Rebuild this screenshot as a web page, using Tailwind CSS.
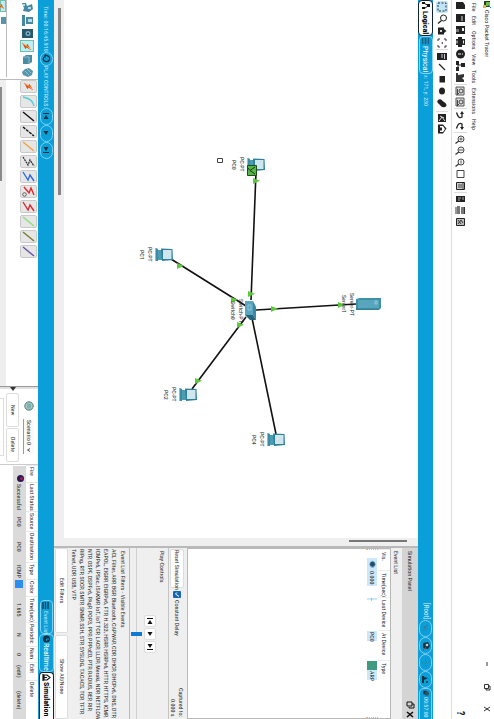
<!DOCTYPE html>
<html lang="en">
<head>
<meta charset="utf-8">
<title>Cisco Packet Tracer</title>
<script src="https://cdn.jsdelivr.net/npm/@tailwindcss/browser@4"></script>
</head>
<body class="bg-white">
<!-- shared icon shapes -->
<svg class="hidden" aria-hidden="true">
  <symbol id="pc" viewBox="0 0 18 15"><path d="M0 1h1v13H0z" fill="#8fbfcd"/><path d="M1 1l2 1v12H1z" fill="#3d8ba3"/><path d="M3 3h4v10H3z" fill="#4b9cb4"/><path d="M6 1.500L17.500 2l.5 11L7 14z" fill="#2f7f97"/><path d="M8 3h8.500v9H8z" fill="#cfe6ee"/></symbol>
  <symbol id="arrow" viewBox="0 0 7 6"><path d="M0 0L7 2.800L0 6z" fill="#5cc83c"/></symbol>
  <symbol id="bolt" viewBox="0 0 12 12"><path d="M1 2l5 3 1-2 4 7-5-3-1 2z" fill="#e8431c"/><path d="M2 3l5 3 3 3" stroke="#ffc02a" fill="none"/></symbol>
  <symbol id="zoomglass" viewBox="0 0 12 12"><circle cx="7" cy="6" r="3" fill="#f4f4f4" stroke="#444"/><path d="M4.800 8L1.500 10.500" stroke="#333" stroke-width="1.300"/></symbol>
  <symbol id="undo" viewBox="0 0 12 12"><path d="M2.500 3.500C4 8.500 6 9.500 8 8V4" fill="none" stroke="#222" stroke-width="1.300"/><path d="M6 5l2-3 2 3z" fill="#222"/></symbol>
  <symbol id="copy" viewBox="0 0 12 12"><path d="M2 2h8v8H2z" fill="#ddd" stroke="#555"/><circle cx="7" cy="6" r="2" fill="none" stroke="#444"/><path d="M3.500 4v5M5 8l-2 2" stroke="#444"/></symbol>
</svg>

<div class="[writing-mode:vertical-rl] w-screen h-screen flex flex-col overflow-hidden bg-white text-[#222] text-[6px] leading-[8px] whitespace-nowrap font-['Liberation_Sans_Narrow','Roboto_Condensed','Liberation_Sans',sans-serif]">

  <header class="w-[14px] shrink-0 flex items-center justify-between">
    <h1 class="flex items-center gap-px">
      <svg class="w-[10px] h-[9px]" viewBox="0 0 10 9"><path d="M2 1h6v6H2z" fill="#253b2b"/><path d="M4 2h4v4H4z" fill="#6cc13b"/><path d="M1 5h3v3H1z" fill="#e5b63a"/><path d="M6 5l3 3" stroke="#1b7fa6"/></svg>
      <span>Cisco Packet Tracer</span>
    </h1>
    <div class="flex items-center">
      <button aria-label="Minimize" class="h-[22px] w-[12px] grid place-items-center"><svg class="w-[8px] h-[8px]" viewBox="0 0 8 8"><path d="M4 2v4" stroke="#333"/></svg></button>
      <button aria-label="Restore" class="h-[23px] w-[12px] grid place-items-center"><svg class="w-[8px] h-[8px]" viewBox="0 0 8 8"><path d="M1.500 1.500h4v4h-4zM3 6v1h4V3H6" fill="none" stroke="#333"/></svg></button>
      <button aria-label="Close" class="h-[21px] w-[12px] grid place-items-center"><svg class="w-[8px] h-[8px]" viewBox="0 0 8 8"><path d="M1 2l6 4M7 2L1 6" stroke="#333"/></svg></button>
    </div>
  </header>

  <nav class="w-[12px] shrink-0 flex items-center gap-[5px] pt-[3px]">
    <a href="#">File</a><a href="#">Edit</a><a href="#">Options</a><a href="#">View</a><a href="#">Tools</a><a href="#">Extensions</a><a href="#">Help</a>
  </nav>

  <div class="w-[17px] shrink-0 flex items-center border-l border-[#ddd] [&>button]:h-[12px] [&>button]:w-[13px] [&>button]:grid [&>button]:place-items-center [&_svg]:w-[12px] [&_svg]:h-[12px]">
    <button aria-label="New"><svg viewBox="0 0 12 12"><path d="M2 2h7l2 3v4H2z" fill="#222"/></svg></button>
    <button aria-label="Open"><svg viewBox="0 0 12 12"><path d="M2 2h9v8H2z" fill="#222"/><path d="M8 4v5" stroke="#ddd"/></svg></button>
    <button aria-label="Save"><svg viewBox="0 0 12 12"><path d="M2 2h9v8H2z" fill="#222"/><path d="M8 4h2v3H8z" fill="#eee"/><path d="M2 5h3v3H2z" fill="#777"/></svg></button>
    <button aria-label="Print"><svg viewBox="0 0 12 12"><path d="M4 1h4v10H4zM2 3h3v6H2zM8 3h3v6H8z" fill="#222"/><path d="M3 4.500v3M9.500 4.500v3" stroke="#eee"/></svg></button>
    <button aria-label="Information"><svg viewBox="0 0 12 12"><circle cx="6.500" cy="6" r="4.500" fill="#222"/><path d="M4 6h3M8 6h1" stroke="#fff"/></svg></button>
    <button aria-label="Network"><svg viewBox="0 0 12 12"><path d="M7 3h4v4H7zM2 1h3v4H2zM2 7h3v4H2z" fill="#222"/><path d="M7 5H4v4" stroke="#222" fill="none"/></svg></button>
    <button aria-label="User"><svg viewBox="0 0 12 12"><path d="M2 1h2v9H2zM4 3l6-1v3l-2 1 2 2v2H4z" fill="#333"/></svg></button>
    <button aria-label="Copy" class="border-t border-[#ddd]"><svg><use href="#copy"/></svg></button>
    <button aria-label="Paste"><svg><use href="#copy"/></svg></button>
    <button aria-label="Undo" class="border-t border-[#ddd]"><svg><use href="#undo"/></svg></button>
    <button aria-label="Redo"><svg viewBox="0 0 12 12"><path d="M2.500 8.500C4 3.500 6 2.500 8 4v4" fill="none" stroke="#222" stroke-width="1.300"/><path d="M6 7l2 3 2-3z" fill="#222"/></svg></button>
    <button aria-label="Zoom in" class="border-t border-[#ddd]"><svg viewBox="0 0 12 12"><use href="#zoomglass"/><path d="M5.500 6h3M7 4.500v3" stroke="#555"/></svg></button>
    <button aria-label="Zoom reset"><svg viewBox="0 0 12 12"><use href="#zoomglass"/><path d="M6 5v2M8 5v2" stroke="#555"/></svg></button>
    <button aria-label="Zoom out"><svg viewBox="0 0 12 12"><use href="#zoomglass"/><path d="M7 4.500v3" stroke="#555"/></svg></button>
    <button aria-label="View palette"><svg viewBox="0 0 12 12"><path d="M3 2.500h7v7H3z" fill="none" stroke="#444"/></svg></button>
    <button aria-label="Custom view"><svg viewBox="0 0 12 12"><path d="M2.500 2.500h8v7h-8z" fill="#ccc" stroke="#222"/><path d="M4 5h4M4 7h4M9 3v6" stroke="#444"/></svg></button>
    <button aria-label="Command log" class="border-t border-[#ddd]"><svg viewBox="0 0 12 12"><path d="M2 3h9v6H2z" fill="#222"/><path d="M4 5h3M4 7h2M9 4v3" stroke="#aaa"/></svg></button>
    <button aria-label="Device list"><svg viewBox="0 0 12 12"><path d="M3 2h3v8H3zM7 3h3v7H7z" fill="#777"/><path d="M2 3v7M10.500 3v7" stroke="#333"/></svg></button>
    <button aria-label="Cluster"><svg viewBox="0 0 12 12"><path d="M2.500 2.500h8v7h-8z" fill="#bbb" stroke="#222"/><path d="M4 8l3-4 2 3M4 4l3 4" stroke="#333" fill="none"/></svg></button>
    <button aria-label="Help" class="mt-auto text-[10px] font-bold leading-[10px]">?</button>
  </div>

  <div class="w-[18px] shrink-0 flex items-center pt-px [&>button]:h-[12px] [&>button]:w-[12px] [&>button]:grid [&>button]:place-items-center [&_svg]:w-[12px] [&_svg]:h-[12px]">
    <button aria-label="Select" class="bg-[#bfe3f7] rounded-xs"><svg viewBox="0 0 12 12"><path d="M2 2h8v8H2z" fill="none" stroke="#333" stroke-dasharray="2 1.500"/></svg></button>
    <button aria-label="Inspect"><svg viewBox="0 0 12 12"><circle cx="7.500" cy="5" r="3" fill="none" stroke="#222"/><path d="M5.500 7.500L2 10.500" stroke="#222" stroke-width="1.200"/></svg></button>
    <button aria-label="Delete"><svg viewBox="0 0 12 12"><path d="M2 2.500h6v7H2zM8 4l2.500 2L8 8z" fill="#222"/><path d="M4 5l2 2M6 5l-2 2" stroke="#fff" stroke-width=".8"/></svg></button>
    <button aria-label="Resize"><svg viewBox="0 0 12 12"><path d="M2 4V2h2M8 2h2v2M10 8v2H8M4 10H2V8" fill="none" stroke="#333"/><path d="M5 6l2-1v2z" fill="#333"/></svg></button>
    <button aria-label="Note" class="border-t border-[#ddd]"><svg viewBox="0 0 12 12"><path d="M1 3h10v7H1z" fill="#222"/><path d="M5 5h2M5 7h2M8.500 4v5" stroke="#ccc"/></svg></button>
    <button aria-label="Line"><svg viewBox="0 0 12 12"><path d="M3 3l6 6" stroke="#222" stroke-width="1.300"/></svg></button>
    <button aria-label="Rectangle"><svg viewBox="0 0 12 12"><path d="M3.500 3h5.500v6.500H3.500z" fill="#222"/></svg></button>
    <button aria-label="Ellipse"><svg viewBox="0 0 12 12"><ellipse cx="6" cy="6" rx="3" ry="3.500" fill="#222"/></svg></button>
    <button aria-label="Freeform"><svg viewBox="0 0 12 12"><path d="M2 3c3-2 4 1 6 2s4 4 1 5-4-1-5-2-4-3-2-5z" fill="#222"/></svg></button>
    <button aria-label="Add simple PDU" class="mt-[2px] border-t border-[#ddd]"><svg viewBox="0 0 12 12"><path d="M2 2h8v8H2z" fill="#222"/><path d="M3 9l3-4 3 4M4 4l4 2" stroke="#ddd" fill="none"/></svg></button>
    <button aria-label="Add complex PDU"><svg viewBox="0 0 12 12"><path d="M2 1.500h5l3.500 4-3.500 5H2z" fill="#222"/><path d="M4 3h3l2 3-2 3H4" fill="#fff"/><path d="M4 4.500h2v3H4z" fill="#222"/></svg></button>
  </div>

  <div class="w-[15px] shrink-0 bg-[#0b9fda] text-white flex items-center justify-between">
    <div class="flex items-center h-full">
      <button class="w-[15px] h-[36px] flex items-center justify-center gap-px bg-white text-black font-bold text-[8px] leading-[11px] border border-[#123] rounded-[4px]">
        <svg class="w-[10px] h-[9px]" viewBox="0 0 10 9"><path d="M2.500 2l5 2.500-4 3" fill="none" stroke="#111"/><path d="M1 1h3v2H1zM6 3h3v3H6zM1 6h3v2H1z" fill="#111"/></svg>Logical</button>
      <button class="w-[14px] h-[38px] flex items-center justify-center gap-px text-[8px] leading-[11px] border border-[#8fd5f2] rounded-[4px]">
        <svg class="w-[9px] h-[8px]" viewBox="0 0 9 8"><path d="M1 1h7v6H1z" fill="#0f5f86"/><path d="M3 1v6M6 1v6" stroke="#29b1e6"/></svg>Physical</button>
      <span class="pt-px text-[#c8ecfb]">x: 171, y: 230</span>
    </div>
    <div class="flex items-center">
      <span class="text-[7px] pb-px text-[#d9f2fc]">[Root]</span>
      <button aria-label="Up" class="w-[13px] h-[17px] border border-[#7fd0f1] rounded-full grid place-items-center"><svg class="w-[9px] h-[9px]" viewBox="0 0 9 9"><path d="M7 1L3 3l4 2M3 3v4" fill="none" stroke="#417a92"/></svg></button>
      <button aria-label="New cluster" class="w-[13px] h-[17px] border border-[#7fd0f1] rounded-full grid place-items-center"><svg class="w-[10px] h-[10px]" viewBox="0 0 10 10"><path d="M2 2l5-1 2 4-2 3-5-1z" fill="#1c3440"/><circle cx="6" cy="4" r="1.300" fill="#b7d9e6"/><path d="M2 9l3-3" stroke="#b32" /></svg></button>
      <button aria-label="Move object" class="w-[13px] h-[17px] border border-[#7fd0f1] rounded-full grid place-items-center"><svg class="w-[9px] h-[9px]" viewBox="0 0 9 9"><path d="M4.500 1v7M1 4.500h7" stroke="#417a92" stroke-dasharray="2 1"/></svg></button>
      <button aria-label="Background" class="w-[13px] h-[17px] border border-[#7fd0f1] rounded-full grid place-items-center"><svg class="w-[9px] h-[9px]" viewBox="0 0 9 9"><path d="M1 1h2v7H1zM3 2l4 1-4 2z" fill="#13303f"/><circle cx="6" cy="7" r="1" fill="#13303f"/></svg></button>
      <button class="w-[13px] h-[31px] border border-b-0 border-[#7fd0f1] rounded-t-[5px] flex items-center text-[#d9f2fc]"><svg class="w-[9px] h-[8px] shrink-0" viewBox="0 0 9 9"><path d="M2 2h4v4H2z" fill="#13303f"/><circle cx="6" cy="5" r="2.500" fill="#2c5263"/></svg>09:57:00</button>
    </div>
  </div>

  <main class="flex-1 min-w-0 flex bg-[#efefef]">
    <section class="flex-1 min-h-0 flex" aria-label="Workspace">
      <div class="flex-1 min-h-0 flex flex-col">
        <div class="relative flex-1 bg-white">
          <svg class="absolute top-0 right-0 w-[354px] h-[538px]" viewBox="64 0 354 538">
            <path d="M256 172L251 300M171 259L246 306M192 389L246 317M276 434L252 318M256 310L356 304" stroke="#111" stroke-width="1.600" fill="none"/>
            <g><use href="#arrow" x="253" y="178" width="7" height="6"/><use href="#arrow" x="248" y="291" width="7" height="6"/><use href="#arrow" x="177" y="263" width="7" height="6"/><use href="#arrow" x="231" y="297" width="7" height="6"/><use href="#arrow" x="271" y="306" width="7" height="6"/><use href="#arrow" x="338" y="302" width="7" height="6"/><use href="#arrow" x="237" y="322" width="7" height="6"/><use href="#arrow" x="195" y="378" width="7" height="6"/></g>
            <path d="M217.500 158.500h5v4h-5z" fill="none" stroke="#444"/>
          </svg>
          <figure class="absolute top-[157px] right-[153px] flex flex-col items-center"><svg class="w-[18px] h-[15px]"><use href="#pc"/></svg><figcaption class="text-center pr-px">PC-PT<br>PC0</figcaption></figure>
          <figure class="absolute top-[247px] right-[245px] flex flex-col items-center"><svg class="w-[18px] h-[15px]"><use href="#pc"/></svg><figcaption class="text-center pr-px">PC-PT<br>PC1</figcaption></figure>
          <figure class="absolute top-[387px] right-[221px] flex flex-col items-center"><svg class="w-[18px] h-[15px]"><use href="#pc"/></svg><figcaption class="text-center pr-px">PC-PT<br>PC2</figcaption></figure>
          <figure class="absolute top-[432px] right-[133px] flex flex-col items-center"><svg class="w-[18px] h-[15px]"><use href="#pc"/></svg><figcaption class="text-center pr-px">PC-PT<br>PC4</figcaption></figure>
          <figure class="absolute top-[293px] right-[37px] flex flex-col items-center"><svg class="w-[25px] h-[14px]" viewBox="0 0 25 14"><path d="M0 2l4-1h21v10l-2 2H0z" fill="#3f8fa8"/><path d="M2 3h21v9H2z" fill="#58a6bd"/><path d="M19 4h2v3h-2z" fill="none" stroke="#b7dde8" stroke-width=".6"/><path d="M0 12h23" stroke="#2b7289"/></svg><figcaption class="text-center">Server-PT<br>Server1</figcaption></figure>
          <figure class="absolute top-[299px] right-[161px] flex flex-col items-center"><svg class="w-[12px] h-[21px]" viewBox="0 0 12 21"><path d="M0 1h8l1 14H0z" fill="#5aa5bd"/><path d="M8 1l3 6v13l-3-5z" fill="#3a8aa4"/><path d="M0 15h8l3 5H5z" fill="#23647a"/><path d="M3 5h3v5H3z" fill="none" stroke="#a9d3e0" stroke-width=".7"/></svg><figcaption class="text-center">Switch-PT<br>Switch0</figcaption></figure>
          <svg class="absolute top-[165px] right-[161px] w-[10px] h-[11px]" viewBox="0 0 10 11"><path d="M.5.500h9v10h-9z" fill="#58b548" stroke="#1d4d1a"/><path d="M8 2L3 5.500 8 9M3 5.500L1 3" fill="none" stroke="#163d14"/></svg>
        </div>
        <div class="w-[10px] shrink-0 pt-[8px] pl-[4px] pr-[3px]"><div class="h-[187px] w-[3px] bg-[#858585]"></div></div>
      </div>
      <div class="h-[8px] shrink-0 pr-[11px] pt-[2px]"><div class="w-[58px] h-[2px] bg-[#777]"></div></div>
    </section>

    <aside class="h-[173px] shrink-0 flex flex-col border-t-2 border-[#b9b9b9]">
      <div class="w-[16px] shrink-0 bg-[#d4d4d4] flex items-center justify-between pt-[3px]">
        <h2>Simulation Panel</h2>
        <div class="flex items-center gap-px">
          <button aria-label="Float"><svg class="block w-[9px] h-[8px]" viewBox="0 0 9 8"><path d="M1 1h5v4H1zM3 6v1h5V3H6" fill="none" stroke="#111"/></svg></button>
          <button aria-label="Close panel"><svg class="block w-[9px] h-[9px]" viewBox="0 0 9 9"><path d="M1 2l6 5M7 2L1 7" stroke="#111" stroke-width="1.600"/></svg></button>
        </div>
      </div>
      <h3 class="w-[11px] shrink-0 leading-[11px] pt-[3px]">Event List</h3>
      <div class="flex-1 min-w-0 border border-[#b8b8b8] bg-white">
        <table class="h-full table-fixed border-collapse text-left">
          <thead><tr class="w-[12px] [&>th]:font-normal [&>th]:border-t [&>th]:border-[#eee] [&>th]:pt-[2px]"><th class="h-[21px]">Vis.</th><th class="h-[27px]">Time(sec)</th><th class="h-[33px]">Last Device</th><th class="h-[30px]">At Device</th><th>Type</th></tr></thead>
          <tbody><tr class="w-[12px] border-x border-dotted border-[#f0b070]">
            <td class="pt-[8px]"><div class="bg-[#cce8fa] w-[10px] flex items-center justify-center"><svg class="w-[9px] h-[13px]" viewBox="0 0 9 13"><path d="M1 6.500c2-5 5-5 7 0-2 5-5 5-7 0z" fill="#7aa7c0"/><circle cx="4.500" cy="6.500" r="2.500" fill="#1f506e"/></svg></div></td>
            <td><div class="w-[10px] leading-[10px] flex"><span class="bg-[#cce8fa] pb-[2px]">0.000</span></div></td>
            <td><div class="w-[10px] leading-[10px] flex"><span class="bg-[#cce8fa]">--</span></div></td>
            <td><div class="w-[10px] leading-[10px] flex"><span class="bg-[#cce8fa] pt-px">PC0</span></div></td>
            <td><div class="w-[10px] leading-[10px] flex"><i class="h-[9px] w-[10px] bg-[#3f9a80]"></i><span class="bg-[#cce8fa] pt-px">ARP</span></div></td>
          </tr></tbody>
        </table>
      </div>
      <div class="w-[19px] shrink-0 border-l border-[#c4c4c4] flex items-center justify-between pr-[2px]">
        <div class="flex items-center gap-[3px] pt-px">
          <button class="w-[14px] h-[39px] bg-white border border-[#ddd] rounded-[2px]">Reset Simulation</button>
          <label class="flex items-center gap-[2px]"><span class="relative"><input type="checkbox" checked class="block appearance-none w-[8px] h-[7px] bg-[#1467b8] rounded-[1px]"><svg class="absolute inset-0 w-[8px] h-[7px] pointer-events-none" viewBox="0 0 8 7"><path d="M4 1.500L2.500 3 6 5.500" fill="none" stroke="#fff"/></svg></span>Constant Delay</label>
        </div>
        <p class="text-right pb-[2px]">Captured to:<br>0.000 s</p>
      </div>
      <div class="w-[39px] shrink-0 border-l border-[#bbb] flex flex-col">
        <h3 class="w-[12px] shrink-0 leading-[12px] pt-[3px]">Play Controls</h3>
        <div class="w-[13px] shrink-0 flex justify-center gap-px [&>button]:h-[12px] [&>button]:w-[12px] [&>button]:bg-white [&>button]:border [&>button]:border-[#ddd] [&>button]:rounded-[2px] [&>button]:grid [&>button]:place-items-center [&_svg]:w-[8px] [&_svg]:h-[8px]">
          <button aria-label="Back"><svg viewBox="0 0 8 8"><path d="M1 1.500h6" stroke="#111"/><path d="M6.500 7L4 3 1.500 7z" fill="#111"/></svg></button>
          <button aria-label="Play"><svg viewBox="0 0 8 8"><path d="M1.500 2h5L4 6z" fill="#111"/></svg></button>
          <button aria-label="Forward"><svg viewBox="0 0 8 8"><path d="M1 6.500h6" stroke="#111"/><path d="M6.500 1L4 5 1.500 1z" fill="#111"/></svg></button>
        </div>
        <div class="flex-1 flex items-center bg-[linear-gradient(#d0d0d0,#d0d0d0)] bg-[length:1px_100%] bg-center bg-no-repeat">
          <input type="range" aria-label="Play speed" class="[writing-mode:vertical-rl] appearance-none bg-transparent h-full w-[11px] [&::-webkit-slider-thumb]:appearance-none [&::-webkit-slider-thumb]:w-[11px] [&::-webkit-slider-thumb]:h-[4px] [&::-webkit-slider-thumb]:bg-[#0f78d4]">
        </div>
      </div>
      <h3 class="w-[11px] shrink-0 leading-[11px] pt-[3px]">Event List Filters - Visible Events</h3>
      <p class="w-[50px] shrink-0 pt-px">ACL Filter, ARP, BGP, Bluetooth, CAPWAP, CDP, DHCP, DHCPv6, DNS, DTP,<br>EAPOL, EIGRP, EIGRPv6, FTP, H.323, HSRP, HSRPv6, HTTP, HTTPS, ICMP,<br>ICMPv6, IPSec, ISAKMP, IoT, IoT TCP, LACP, LLDP, Meraki, NDP, NETFLOW,<br>NTP, OSPF, OSPFv6, PAgP, POP3, PPP, PPPoED, PTP, RADIUS, REP, RIP,<br>RIPng, RTP, SCCP, SMTP, SNMP, SSH, STP, SYSLOG, TACACS, TCP, TFTP,<br>Telnet, UDP, USB, VTP</p>
      <div class="w-[14px] shrink-0 flex gap-[2px] pl-px">
        <button class="flex-1 bg-white border border-[#ddd] rounded-[2px]">Edit Filters</button>
        <button class="flex-1 bg-white border border-[#ddd] rounded-[2px]">Show All/None</button>
      </div>
    </aside>
  </main>

  <div class="w-[16px] shrink-0 bg-[#0b9fda] text-white flex items-center justify-between">
    <div class="flex items-center pt-[6px]">
      <span class="text-[#c8ecfb]">Time: 00:16:45.910</span>
      <button aria-label="Reset network" class="w-[13px] h-[14px] border border-[#7fd0f1] rounded-full grid place-items-center"><svg class="w-[9px] h-[9px]" viewBox="0 0 9 9"><path d="M3 1.500C9 1 9 8 4 7.500 0 7 1 3 3 2.500M3 .5v3" fill="none" stroke="#12303d" stroke-width="1.200"/></svg></button>
      <span class="text-[#d9f2fc]">PLAY CONTROLS:</span>
      <button aria-label="Step back" class="w-[13px] h-[17px] border border-[#7fd0f1] rounded-full grid place-items-center"><svg class="w-[8px] h-[8px]" viewBox="0 0 8 8"><path d="M1 1.500h6" stroke="#12303d"/><path d="M6.500 7L4 3 1.500 7z" fill="#12303d"/></svg></button>
      <button aria-label="Run" class="w-[13px] h-[17px] border border-[#7fd0f1] rounded-full grid place-items-center"><svg class="w-[8px] h-[8px]" viewBox="0 0 8 8"><path d="M1.500 2h5L4 6z" fill="#12303d"/></svg></button>
      <button aria-label="Step forward" class="w-[13px] h-[17px] border border-[#7fd0f1] rounded-full grid place-items-center"><svg class="w-[8px] h-[8px]" viewBox="0 0 8 8"><path d="M1 6.500h6" stroke="#12303d"/><path d="M6.500 1L4 5 1.500 1z" fill="#12303d"/></svg></button>
    </div>
    <div class="flex items-center">
      <button class="w-[13px] h-[34px] flex items-center gap-px border border-[#7fd0f1] rounded-[4px] text-[#c8ecfb]"><svg class="w-[10px] h-[9px] shrink-0" viewBox="0 0 10 9"><path d="M2 1v7M4.500 1v7M7 1v7" stroke="#12303d" stroke-width="1.200"/></svg>Event List</button>
      <button class="w-[15px] h-[38px] flex items-center justify-center border border-[#7fd0f1] rounded-[4px] text-[8px]"><svg class="w-[9px] h-[8px] shrink-0" viewBox="0 0 9 8"><circle cx="4.500" cy="4" r="3.500" fill="#12303d"/><path d="M7 4H4.500v2" stroke="#0b9fda" fill="none"/></svg>Realtime</button>
      <button class="w-[15px] h-[47px] flex items-center bg-white text-black font-bold text-[8px] border border-b-0 border-[#123] rounded-t-[4px]"><svg class="w-[10px] h-[9px] shrink-0" viewBox="0 0 10 9"><path d="M2 1v7M3 2h3l3 2.500L6 7H3z" fill="none" stroke="#111" stroke-width="1.200"/><path d="M3 4.500h3" stroke="#111"/></svg>Simulation</button>
    </div>
  </div>

  <footer class="w-[38px] shrink-0 flex">
    <section class="h-[80px] shrink-0 border-b border-[#bbb] pr-[3px] flex flex-col justify-between" aria-label="Device types">
      <div class="w-[16px] flex items-center gap-px pt-px [&>button]:h-[12px] [&>button]:w-[14px] [&>button]:grid [&>button]:place-items-center [&_svg]:w-[13px] [&_svg]:h-[11px]">
        <button aria-label="Network devices"><svg viewBox="0 0 13 11"><path d="M1 1h4l1 3 5-2 1 5-4 3-6-1 1-3z" fill="#4689a3"/><path d="M7 5h3v2H7zM2 2h2v2H2z" fill="#b8dce8"/></svg></button>
        <button aria-label="End devices"><svg viewBox="0 0 13 11"><path d="M1 0h3v11H1zM5 2h7v7H5z" fill="#4689a3"/><path d="M7 4h4v3H7z" fill="#b8dce8"/></svg></button>
        <button aria-label="Components"><svg viewBox="0 0 13 11"><path d="M1 1h11v9H1z" fill="#28586c"/><circle cx="7" cy="5.500" r="2.500" fill="#7eb0c3"/><circle cx="7" cy="5.500" r="1" fill="#163a48"/></svg></button>
        <button aria-label="Connections" class="bg-[#b9f0f5] border border-[#7ba]"><svg viewBox="0 0 12 12"><use href="#bolt"/></svg></button>
        <button aria-label="Miscellaneous"><svg viewBox="0 0 13 11"><path d="M2 3l3-2h6v7l-3 2H2z" fill="#4b8ca5"/><path d="M2 3h6v7" stroke="#8dbdcd" fill="none"/></svg></button>
        <button aria-label="Multiuser"><svg viewBox="0 0 13 11"><path d="M4 2l4-1 4 3-1 4-4 2-5-2-1-3z" fill="#5795ad"/><path d="M4 4l4 4M6 2l4 4" stroke="#8fc0d0"/></svg></button>
      </div>
      <div class="w-[7px] mb-[2px] border-r border-[#bbb] flex items-center justify-start gap-[5px] overflow-hidden">
        <button aria-label="Copper" class="w-[6px] h-[12px] bg-[#b9f0f5] border border-[#7ba] grid place-items-center"><svg class="w-[6px] h-[10px]" viewBox="4 0 8 12"><use href="#bolt" width="12" height="12"/></svg></button>
        <button aria-label="Sub type" class="w-[5px] h-[7px] bg-[#5795ad]"></button>
      </div>
    </section>

    <section class="flex-1 min-h-0 pr-px flex flex-col justify-between" aria-label="Cables">
      <div class="w-[17px] flex items-center gap-[2px] [&>button]:h-[13px] [&>button]:w-[17px] [&>button]:bg-[#e6e6e6] [&>button]:border [&>button]:border-[#c9c9c9] [&>button]:rounded-[2px] [&>button]:grid [&>button]:place-items-center [&_svg]:w-[13px] [&_svg]:h-[11px] [&_svg]:fill-none">
        <button aria-label="Automatic"><svg viewBox="0 0 12 12"><use href="#bolt"/></svg></button>
        <button aria-label="Console"><svg viewBox="0 0 13 11"><path d="M1 1C6 2 11 4 12 10" stroke="#4fd0d0" stroke-width="1.300"/></svg></button>
        <button aria-label="Straight-through"><svg viewBox="0 0 13 11"><path d="M1 1l11 9" stroke="#111" stroke-width="1.400"/></svg></button>
        <button aria-label="Cross-over"><svg viewBox="0 0 13 11"><path d="M1 1l11 9" stroke="#111" stroke-width="1.400" stroke-dasharray="3 1"/></svg></button>
        <button aria-label="Fiber"><svg viewBox="0 0 13 11"><path d="M1 1l11 9" stroke="#f2a23a" stroke-width="1.400"/></svg></button>
        <button aria-label="Phone"><svg viewBox="0 0 13 11"><path d="M1 1l5 8 2-5 4 6" stroke="#333" stroke-width="1.300" stroke-dasharray="2 .7"/></svg></button>
        <button aria-label="Coaxial"><svg viewBox="0 0 13 11"><path d="M1 1l5 8 2-5 4 6" stroke="#2d6be0" stroke-width="1.400"/></svg></button>
        <button aria-label="Serial DCE"><svg viewBox="0 0 13 11"><path d="M2 1l5 6 2-5 3 7" stroke="#e0262c" stroke-width="1.400"/><circle cx="2.500" cy="8.500" r="1.800" stroke="#444" stroke-width=".8"/></svg></button>
        <button aria-label="Serial DTE"><svg viewBox="0 0 13 11"><path d="M1 1l5 8 2-5 4 6" stroke="#e0262c" stroke-width="1.400"/></svg></button>
        <button aria-label="Octal"><svg viewBox="0 0 13 11"><path d="M1 1l11 9" stroke="#86e07a" stroke-width="1.400"/></svg></button>
        <button aria-label="IoT custom"><svg viewBox="0 0 13 11"><path d="M1 1l11 9" stroke="#7d7a30" stroke-width="1.400"/></svg></button>
        <button aria-label="USB"><svg viewBox="0 0 13 11"><path d="M1 1l11 9" stroke="#6a4ea0" stroke-width="1.400"/></svg></button>
      </div>
      <div class="w-[6px] bg-[#eee] pt-[7px] pr-[4px]"><div class="w-[2px] h-[94px] bg-[#8a8a8a]"></div></div>
    </section>

    <div class="h-[3px] shrink-0 bg-[#e0e0e0] border-t border-[#999] pr-[22px]"><svg class="w-[6px] h-[4px]" viewBox="0 0 6 4"><path d="M0 0h6L3 4z" fill="#333"/></svg></div>

    <section class="h-[76px] shrink-0 border-b border-[#ccc] flex flex-col" aria-label="Scenario">
      <div class="w-[19px] shrink-0 flex items-center gap-[8px] pt-[12px]">
        <svg class="w-[10px] h-[10px] shrink-0" viewBox="0 0 10 10"><circle cx="5" cy="5" r="4.200" fill="#a9cdb9" stroke="#4f7d82"/><path d="M3 2.500h4v5H3z" fill="#7fb0b4"/></svg>
        <div class="relative w-[11px] h-[35px] border-l border-[#999] bg-[#fafafa]">
          <select aria-label="Scenario" class="[writing-mode:vertical-rl] appearance-none block w-[10px] h-full leading-[10px] pt-px"><option>Scenario 0</option></select>
          <svg class="absolute bottom-[2px] right-[3px] w-[5px] h-[4px] pointer-events-none" viewBox="0 0 5 4"><path d="M4 .5L1.500 2 4 3.500" fill="none" stroke="#333" stroke-width=".8"/></svg>
        </div>
      </div>
      <div class="w-[13px] shrink-0 flex gap-px pt-[4px] pb-[2px]">
        <button class="flex-1 border border-[#ddd] rounded-[2px]">New</button>
        <button class="flex-1 border border-[#ddd] rounded-[2px]">Delete</button>
      </div>
      <button aria-label="Toggle PDU list" class="mt-[9px] mb-[8px] mr-[2px] w-[5px] border border-l-0 border-[#ddd]"></button>
    </section>

    <section class="h-[254px] shrink-0">
      <table class="h-full table-fixed border-collapse text-left">
        <thead><tr class="w-[12px] [&>th]:font-normal [&>th]:border-t [&>th]:border-[#e8e8e8] [&>th]:pt-px">
          <th class="h-[17px]">Fire</th><th class="h-[29px]">Last Status</th><th class="h-[20px]">Source</th><th class="h-[31px]">Destination</th><th class="h-[17px]">Type</th><th class="h-[17px]">Color</th><th class="h-[26px]">Time(sec)</th><th class="h-[24px]">Periodic</th><th class="h-[16px]">Num</th><th class="h-[18px]">Edit</th><th>Delete</th></tr></thead>
        <tbody><tr class="w-[13px] text-center [&>td]:bg-[#dadada] [&>td]:border-r [&>td]:border-white">
          <td class="pt-[9px]"><svg class="w-[7px] h-[7px] inline-block" viewBox="0 0 7 7"><circle cx="3.500" cy="3.500" r="3.500" fill="#2c1850"/><circle cx="4.500" cy="3.500" r="1.500" fill="#a01c50"/></svg></td>
          <td>Successful</td><td>PC0</td><td>PC0</td><td>ICMP</td><td class="text-left"><i class="inline-block w-[8px] h-[8px] bg-[#2f8eed]"></i></td><td>1.665</td><td>N</td><td>0</td><td>(edit)</td><td>(delete)</td></tr></tbody>
      </table>
    </section>
  </footer>
</div>
</body>
</html>
